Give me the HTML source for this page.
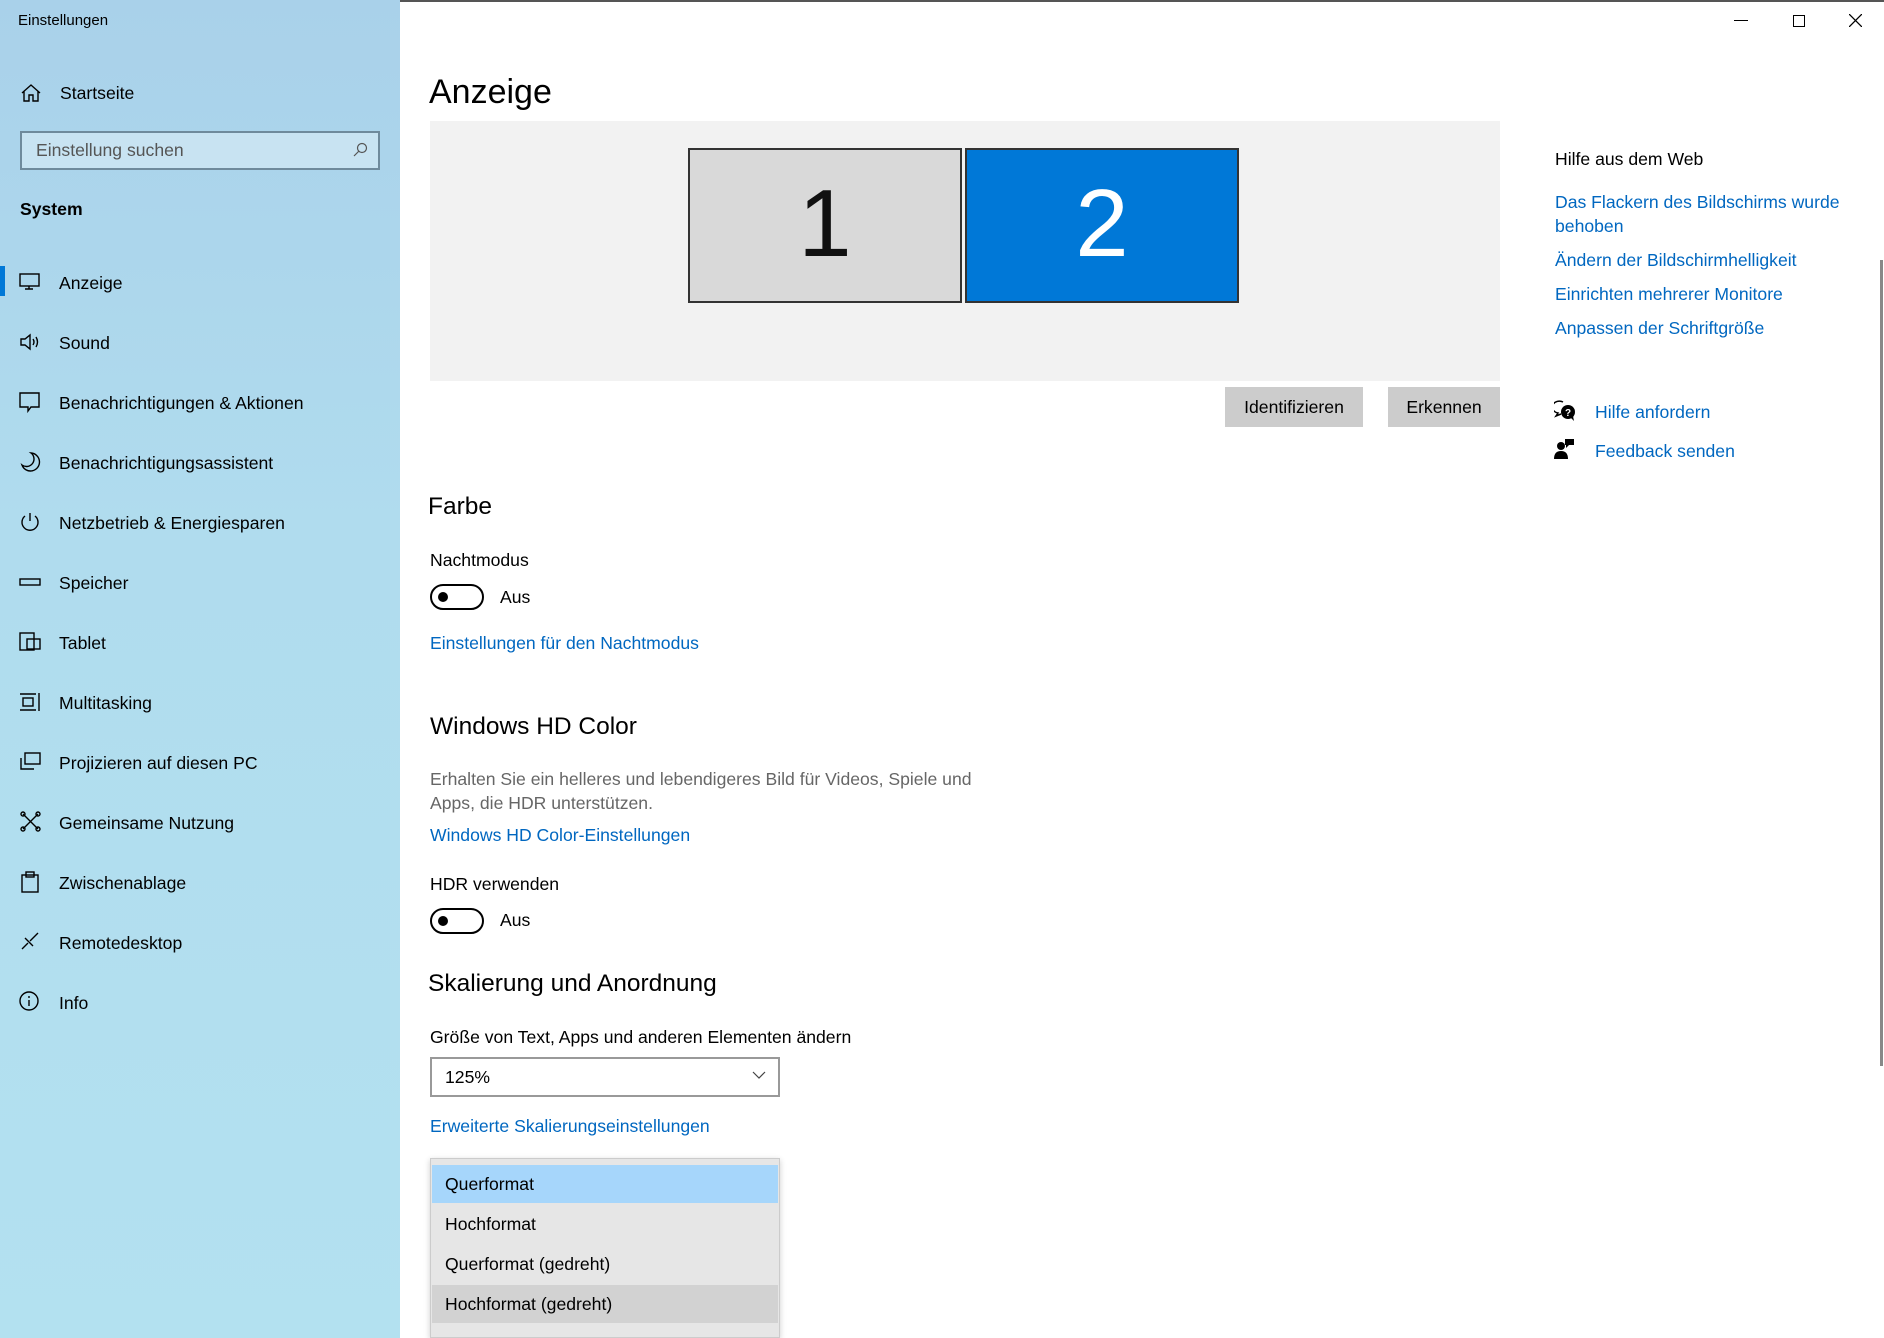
<!DOCTYPE html>
<html><head><meta charset="utf-8"><style>
*{margin:0;padding:0;box-sizing:border-box}
body{width:1884px;height:1338px;overflow:hidden;background:#fff;font-family:"Segoe UI","Liberation Sans",sans-serif;color:#000;position:relative}
.a{position:absolute;white-space:nowrap}
#side{position:absolute;left:0;top:0;width:400px;height:1338px;background:linear-gradient(180deg,#a9d1ea 0%,#b0dcee 40%,#b3e1f0 100%)}
.nav{position:absolute;left:59px;font-size:17.6px;line-height:24px}
.ic{position:absolute;left:19px;width:24px;height:24px}
.t18{font-size:17.6px;line-height:24px}
.link{color:#0067c0}
.tog{position:absolute;width:54px;height:26px;border:2px solid #000;border-radius:13px}
.tog:after{content:"";position:absolute;left:6px;top:6px;width:10px;height:10px;border-radius:50%;background:#000}
</style></head><body>
<div style="position:absolute;left:0;top:0;width:1884px;height:2px;background:#555"></div>
<div id="side">
<div class="a" style="left:18px;top:12px;font-size:15px">Einstellungen</div>
<svg class="ic" style="top:81px" viewBox="0 0 24 24" fill="none" stroke="#000" stroke-width="1.4"><path d="M3 12 L12 4 L21 12 M5 10 V20 H10 V14 H14 V20 H19 V10"/></svg>
<div class="nav" style="top:81px;left:60px">Startseite</div>
<div style="position:absolute;left:20px;top:131px;width:360px;height:39px;border:2px solid #6f8a9c;background:rgba(255,255,255,0.35)"></div>
<div class="a" style="left:36px;top:140px;font-size:17.6px;color:#555">Einstellung suchen</div>
<svg style="position:absolute;left:352px;top:142px" width="16" height="16" viewBox="0 0 16 16" fill="none" stroke="#555" stroke-width="1.2"><circle cx="10" cy="6" r="4.5"/><path d="M7 9 L2 14"/></svg>
<div class="a" style="left:20px;top:199px;font-size:17.6px;font-weight:bold">System</div>
<div style="position:absolute;left:0;top:266px;width:5px;height:30px;background:#0078d7"></div>
<svg class="ic" style="top:270px" viewBox="0 0 24 24" fill="none" stroke="#000" stroke-width="1.4"><rect x="1" y="4" width="19" height="12"/><path d="M10 16 V19 M6 19 H14"/></svg>
<div class="nav" style="top:271px">Anzeige</div>
<svg class="ic" style="top:330px" viewBox="0 0 24 24" fill="none" stroke="#000" stroke-width="1.4"><path d="M2 9 H6 L11 5 V19 L6 15 H2 Z M14 9 Q16 12 14 15 M17 7 Q20 12 17 17"/></svg>
<div class="nav" style="top:331px">Sound</div>
<svg class="ic" style="top:390px" viewBox="0 0 24 24" fill="none" stroke="#000" stroke-width="1.4"><path d="M1 3 H20 V17 H12 L9 21 V17 H1 Z"/></svg>
<div class="nav" style="top:391px">Benachrichtigungen &amp; Aktionen</div>
<svg class="ic" style="top:450px" viewBox="0 0 24 24" fill="none" stroke="#000" stroke-width="1.4"><path d="M12 3 A9 9 0 1 1 3 15 A7 7 0 0 0 12 3 Z"/></svg>
<div class="nav" style="top:451px">Benachrichtigungsassistent</div>
<svg class="ic" style="top:510px" viewBox="0 0 24 24" fill="none" stroke="#000" stroke-width="1.4"><path d="M11 3 V11 M6 6 A8 8 0 1 0 16 6"/></svg>
<div class="nav" style="top:511px">Netzbetrieb &amp; Energiesparen</div>
<svg class="ic" style="top:570px" viewBox="0 0 24 24" fill="none" stroke="#000" stroke-width="1.4"><rect x="1" y="9" width="20" height="6"/></svg>
<div class="nav" style="top:571px">Speicher</div>
<svg class="ic" style="top:630px" viewBox="0 0 24 24" fill="none" stroke="#000" stroke-width="1.4"><rect x="1" y="3" width="14" height="17"/><rect x="8" y="9" width="13" height="10"/></svg>
<div class="nav" style="top:631px">Tablet</div>
<svg class="ic" style="top:690px" viewBox="0 0 24 24" fill="none" stroke="#000" stroke-width="1.4"><path d="M1 4 H17 M1 20 H17 M20 3 V21"/><rect x="4" y="8" width="10" height="8"/></svg>
<div class="nav" style="top:691px">Multitasking</div>
<svg class="ic" style="top:750px" viewBox="0 0 24 24" fill="none" stroke="#000" stroke-width="1.4"><rect x="6" y="3" width="15" height="11"/><path d="M2 8 V19 H15"/></svg>
<div class="nav" style="top:751px">Projizieren auf diesen PC</div>
<svg class="ic" style="top:810px" viewBox="0 0 24 24" fill="none" stroke="#000" stroke-width="1.4"><path d="M4 4 L19 19 M19 4 L4 19"/><circle cx="4" cy="4" r="2"/><circle cx="19" cy="4" r="2"/><circle cx="4" cy="19" r="2"/><circle cx="19" cy="19" r="2"/></svg>
<div class="nav" style="top:811px">Gemeinsame Nutzung</div>
<svg class="ic" style="top:870px" viewBox="0 0 24 24" fill="none" stroke="#000" stroke-width="1.4"><rect x="3" y="5" width="16" height="17"/><rect x="7" y="2" width="8" height="5"/></svg>
<div class="nav" style="top:871px">Zwischenablage</div>
<svg class="ic" style="top:930px" viewBox="0 0 24 24" fill="none" stroke="#000" stroke-width="1.4"><path d="M19 3 L11 11 M3 19 L9 13 M6 8 L14 16"/></svg>
<div class="nav" style="top:931px">Remotedesktop</div>
<svg class="ic" style="top:990px" viewBox="0 0 24 24" fill="none" stroke="#000" stroke-width="1.4"><circle cx="10" cy="11" r="9"/><path d="M10 10 V16 M10 6 V8"/></svg>
<div class="nav" style="top:991px">Info</div>
</div>

<div style="position:absolute;left:1734px;top:20px;width:14px;height:1.3px;background:#000"></div>
<div style="position:absolute;left:1793px;top:15px;width:12px;height:12px;border:1.3px solid #000"></div>
<svg style="position:absolute;left:1849px;top:14px" width="13" height="13" viewBox="0 0 13 13" stroke="#000" stroke-width="1.3"><path d="M0 0 L13 13 M13 0 L0 13"/></svg>

<div class="a" style="left:429px;top:73px;font-size:34px;font-weight:300">Anzeige</div>
<div style="position:absolute;left:430px;top:121px;width:1070px;height:260px;background:#f2f2f2"></div>
<div style="position:absolute;left:688px;top:148px;width:274px;height:155px;background:#d9d9d9;border:2px solid #333;font-size:96px;font-weight:300;text-align:center;line-height:148px;color:#111">1</div>
<div style="position:absolute;left:965px;top:148px;width:274px;height:155px;background:#0078d7;border:2px solid #333;color:#fff;font-size:96px;font-weight:300;text-align:center;line-height:148px">2</div>
<div style="position:absolute;left:1225px;top:387px;width:138px;height:40px;background:#ccc;font-size:17.6px;text-align:center;line-height:40px">Identifizieren</div>
<div style="position:absolute;left:1388px;top:387px;width:112px;height:40px;background:#ccc;font-size:17.6px;text-align:center;line-height:40px">Erkennen</div>

<div class="a" style="left:428px;top:493px;font-size:24.5px">Farbe</div>
<div class="a t18" style="left:430px;top:548px">Nachtmodus</div>
<div class="tog" style="left:430px;top:584px"></div>
<div class="a t18" style="left:500px;top:585px">Aus</div>
<div class="a t18 link" style="left:430px;top:631px">Einstellungen für den Nachtmodus</div>
<div class="a" style="left:430px;top:713px;font-size:24.5px">Windows HD Color</div>
<div class="a t18" style="left:430px;top:767px;color:#666">Erhalten Sie ein helleres und lebendigeres Bild für Videos, Spiele und</div>
<div class="a t18" style="left:430px;top:791px;color:#666">Apps, die HDR unterstützen.</div>
<div class="a t18 link" style="left:430px;top:823px">Windows HD Color-Einstellungen</div>
<div class="a t18" style="left:430px;top:872px">HDR verwenden</div>
<div class="tog" style="left:430px;top:908px"></div>
<div class="a t18" style="left:500px;top:908px">Aus</div>
<div class="a" style="left:428px;top:970px;font-size:24.5px">Skalierung und Anordnung</div>
<div class="a t18" style="left:430px;top:1025px">Größe von Text, Apps und anderen Elementen ändern</div>
<div style="position:absolute;left:430px;top:1057px;width:350px;height:40px;border:2px solid #999"></div>
<div class="a t18" style="left:445px;top:1065px">125%</div>
<svg style="position:absolute;left:752px;top:1071px" width="14" height="9" viewBox="0 0 14 9" fill="none" stroke="#444" stroke-width="1.2"><path d="M1 1 L7 7 L13 1"/></svg>
<div class="a t18 link" style="left:430px;top:1114px">Erweiterte Skalierungseinstellungen</div>

<div style="position:absolute;left:430px;top:1158px;width:350px;height:180px;background:#e6e6e6;border:1px solid #ccc;box-shadow:0 2px 6px rgba(0,0,0,0.2)"></div>
<div style="position:absolute;left:432px;top:1165px;width:346px;height:38px;background:#a6d6fb"></div>
<div style="position:absolute;left:432px;top:1285px;width:346px;height:38px;background:#d2d2d2"></div>
<div class="a t18" style="left:445px;top:1172px">Querformat</div>
<div class="a t18" style="left:445px;top:1212px">Hochformat</div>
<div class="a t18" style="left:445px;top:1252px">Querformat (gedreht)</div>
<div class="a t18" style="left:445px;top:1292px">Hochformat (gedreht)</div>

<div class="a t18" style="left:1555px;top:147px">Hilfe aus dem Web</div>
<div class="a t18 link" style="left:1555px;top:190px">Das Flackern des Bildschirms wurde</div>
<div class="a t18 link" style="left:1555px;top:214px">behoben</div>
<div class="a t18 link" style="left:1555px;top:248px">Ändern der Bildschirmhelligkeit</div>
<div class="a t18 link" style="left:1555px;top:282px">Einrichten mehrerer Monitore</div>
<div class="a t18 link" style="left:1555px;top:316px">Anpassen der Schriftgröße</div>
<svg style="position:absolute;left:1554px;top:400px" width="22" height="22" viewBox="0 0 22 22"><path d="M9 2 A7 6 0 1 0 4 13 L2 16 L7 14" fill="none" stroke="#000" stroke-width="1.5"/><circle cx="14" cy="12" r="7" fill="#000"/><path d="M17 18 L20 21 L19 16" fill="#000"/><text x="14" y="16" font-size="10" fill="#fff" text-anchor="middle" font-family="Liberation Sans" font-weight="bold">?</text></svg>
<div class="a t18 link" style="left:1595px;top:400px">Hilfe anfordern</div>
<svg style="position:absolute;left:1554px;top:438px" width="22" height="22" viewBox="0 0 22 22" fill="#000"><circle cx="7" cy="8" r="4"/><path d="M0 21 Q0 13 7 13 Q14 13 14 21 Z"/><path d="M11 1 H20 V7 H15 L12 10 V7 H11 Z"/></svg>
<div class="a t18 link" style="left:1595px;top:439px">Feedback senden</div>

<div style="position:absolute;left:1880px;top:260px;width:3px;height:806px;background:#888"></div>
</body></html>
